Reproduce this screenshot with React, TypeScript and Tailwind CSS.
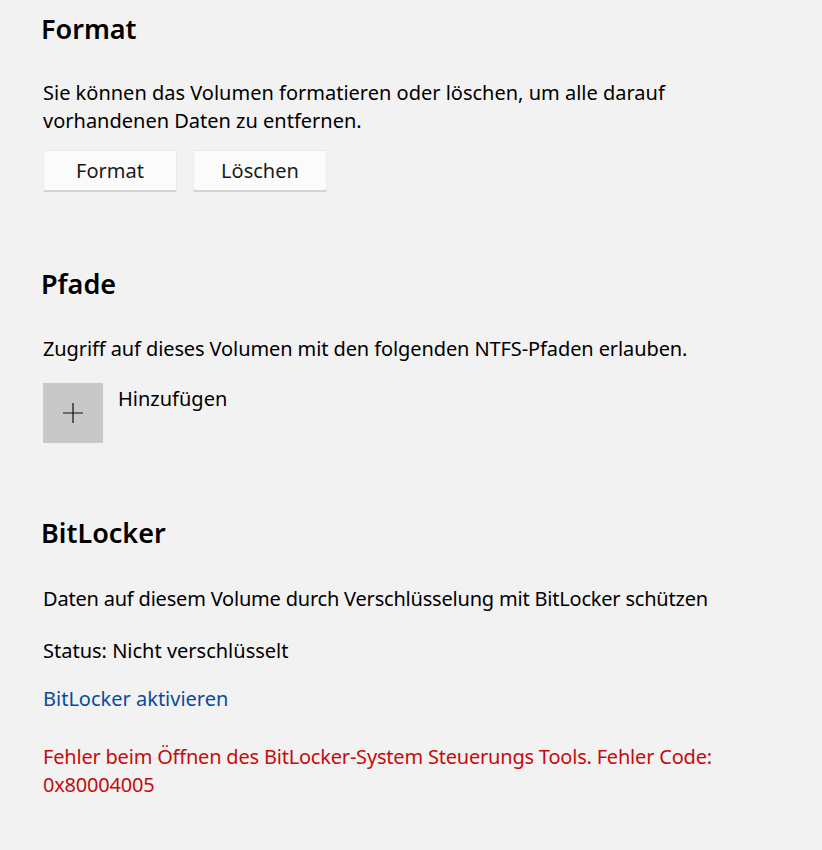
const font = { fontFamily: '"Noto Sans", "Open Sans", sans-serif' };

const Heading = ({ children }: { children: React.ReactNode }) => (
  <h2 className="text-[27px] leading-[36px] font-semibold text-black ml-[-2px]">{children}</h2>
);

const App = () => {
  return (
    <div className="min-h-screen w-[822px] h-[850px] bg-[#f2f2f2] pl-[43px] pt-[11px] text-[#000000]" style={font}>
      {/* Format */}
      <section>
        <Heading>Format</Heading>
        <p className="mt-[32px] text-[20px] leading-[28px]">
          <span className="block">Sie können das Volumen formatieren oder löschen, um alle darauf</span>
          <span className="block">vorhandenen Daten zu entfernen.</span>
        </p>
        <div className="mt-[15px] flex gap-[16px]">
          <button className="w-[134px] h-[42px] bg-[#fbfbfb] border border-[#ebebeb] border-b-2 border-b-[#d4d4d4] text-[20px] text-[#1a1a1a]">
            Format
          </button>
          <button className="w-[134px] h-[42px] bg-[#fbfbfb] border border-[#ebebeb] border-b-2 border-b-[#d4d4d4] text-[20px] text-[#1a1a1a]">
            Löschen
          </button>
        </div>
      </section>

      {/* Pfade */}
      <section className="mt-[74px]">
        <Heading>Pfade</Heading>
        <p className="mt-[33px] text-[20px] leading-[28px] tracking-[-0.1px]">
          Zugriff auf dieses Volumen mit den folgenden NTFS-Pfaden erlauben.
        </p>
        <div className="mt-[20px] flex items-start gap-[15px]">
          <button className="w-[60px] h-[60px] bg-[#c8c8c8] flex items-center justify-center">
            <svg width="20" height="20" viewBox="0 0 20 20" fill="none" stroke="#111" strokeWidth="1.2">
              <path d="M10 0v20M0 10h20" />
            </svg>
          </button>
          <span className="text-[20px] leading-[28px] mt-[2px]">Hinzufügen</span>
        </div>
      </section>

      {/* BitLocker */}
      <section className="mt-[72px]">
        <Heading>BitLocker</Heading>
        <p className="mt-[34px] text-[20px] leading-[28px] tracking-[-0.2px]">
          Daten auf diesem Volume durch Verschlüsselung mit BitLocker schützen
        </p>
        <p className="mt-[24px] text-[20px] leading-[28px]">Status: Nicht verschlüsselt</p>
        <a className="block mt-[20px] text-[20px] leading-[28px] text-[#0a4a9c] cursor-pointer">
          BitLocker aktivieren
        </a>
        <p className="mt-[30px] text-[20px] leading-[28px] text-[#c50b0b] tracking-[-0.2px]">
          <span className="block">Fehler beim Öffnen des BitLocker-System Steuerungs Tools. Fehler Code:</span>
          <span className="block">0x80004005</span>
        </p>
      </section>
    </div>
  );
};

export default App;
